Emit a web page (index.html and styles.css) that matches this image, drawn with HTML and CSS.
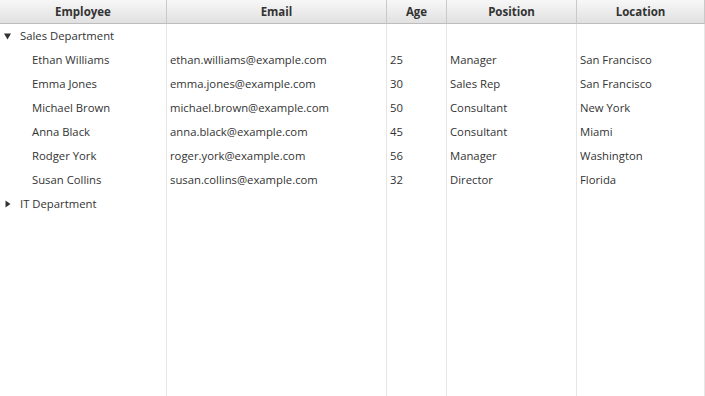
FILE: index.html
```html
<!DOCTYPE html>
<html lang="en">
<head>
    <meta charset="UTF-8">
    <title>Employees</title>
    <link rel="stylesheet" href="styles.css">
</head>
<body>
    <div class="tree-table">
        <div class="head">Employee</div>
        <div class="head">Email</div>
        <div class="head">Age</div>
        <div class="head">Position</div>
        <div class="head">Location</div>

        <div class="cell group"><svg class="arrow" width="8" height="8" viewBox="0 0 8 8"><path d="M0 1.5H7L3.5 7.5Z" fill="#333"/></svg>Sales Department</div>
        <div class="cell"></div><div class="cell"></div><div class="cell"></div><div class="cell"></div>

        <div class="cell child">Ethan Williams</div>
        <div class="cell">ethan.williams@example.com</div>
        <div class="cell">25</div>
        <div class="cell">Manager</div>
        <div class="cell">San Francisco</div>

        <div class="cell child">Emma Jones</div>
        <div class="cell">emma.jones@example.com</div>
        <div class="cell">30</div>
        <div class="cell">Sales Rep</div>
        <div class="cell">San Francisco</div>

        <div class="cell child">Michael Brown</div>
        <div class="cell">michael.brown@example.com</div>
        <div class="cell">50</div>
        <div class="cell">Consultant</div>
        <div class="cell">New York</div>

        <div class="cell child">Anna Black</div>
        <div class="cell">anna.black@example.com</div>
        <div class="cell">45</div>
        <div class="cell">Consultant</div>
        <div class="cell">Miami</div>

        <div class="cell child">Rodger York</div>
        <div class="cell">roger.york@example.com</div>
        <div class="cell">56</div>
        <div class="cell">Manager</div>
        <div class="cell">Washington</div>

        <div class="cell child">Susan Collins</div>
        <div class="cell">susan.collins@example.com</div>
        <div class="cell">32</div>
        <div class="cell">Director</div>
        <div class="cell">Florida</div>

        <div class="cell group"><svg class="arrow" width="8" height="8" viewBox="0 0 8 8"><path d="M1.5 0.5V7.5L6.5 4Z" fill="#333"/></svg>IT Department</div>
        <div class="cell"></div><div class="cell"></div><div class="cell"></div><div class="cell"></div>

        <div class="cell"></div><div class="cell"></div><div class="cell"></div><div class="cell"></div><div class="cell"></div>
    </div>
</body>
</html>
```

FILE: styles.css
```css
html, body {
    margin: 0;
    height: 100%;
}
body {
    font-family: "Open Sans", "Noto Sans", sans-serif;
    font-size: 11.3px;
    color: #333;
    background: #fff;
}
.tree-table {
    display: grid;
    grid-template-columns: 167px 220px 60px 130px 1fr;
    grid-template-rows: 24px repeat(8, 24px) 1fr;
    height: 100%;
}
.head {
    background: linear-gradient(#f7f7f7, #e1e1e1);
    border-right: 1px solid #c9c9c9;
    border-bottom: 1px solid #bdbdbd;
    font-weight: bold;
    font-size: 11.5px;
    color: #333;
    display: flex;
    align-items: center;
    justify-content: center;
}
.cell {
    border-right: 1px solid #e6e6e6;
    padding-left: 3px;
    padding-bottom: 1px;
    display: flex;
    align-items: center;
    white-space: nowrap;
}
.cell.child {
    padding-left: 32px;
}
.cell.group {
    padding-left: 4px;
}
.arrow {
    margin-right: 8px;
}
```
